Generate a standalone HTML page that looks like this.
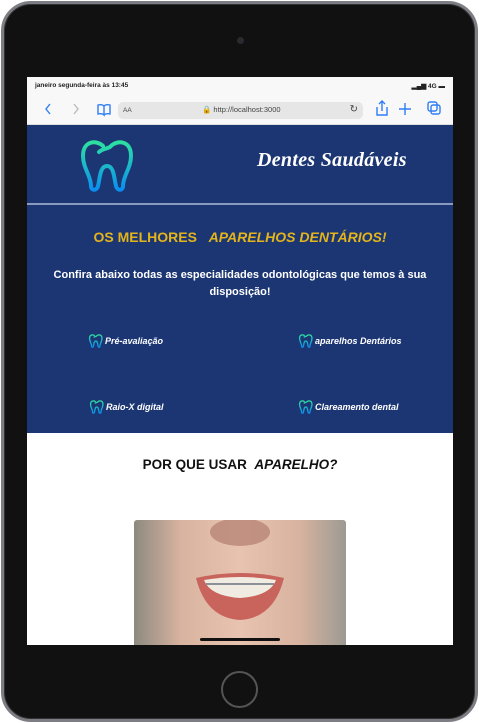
<!DOCTYPE html>
<html><head><meta charset="utf-8"><style>
*{margin:0;padding:0;box-sizing:border-box}
body{width:479px;height:723px;background:#fff;position:relative;overflow:hidden;font-family:"Liberation Sans",sans-serif}
.frame{position:absolute;left:1px;top:1px;width:477px;height:721px;border-radius:30px;background:#111;border:3px solid #7d7e84;box-shadow:inset 0 0 0 1px #333}
.cam{position:absolute;left:237px;top:37px;width:7px;height:7px;border-radius:50%;background:#2a2a30}
.home{position:absolute;left:221px;top:671px;width:37px;height:37px;border-radius:50%;border:2px solid #555}
.screen{position:absolute;left:27px;top:77px;width:426px;height:568px;background:#fff;overflow:hidden}
.status{height:17px;background:#f8f8f8;font-size:6.5px;font-weight:bold;color:#222;padding:5px 0 0 8px;position:relative}
.status .r{position:absolute;right:8px;top:5px}
.tool{height:31px;background:#f8f8f8;position:relative;border-bottom:1px solid #ddd}
.url{position:absolute;left:91px;top:8px;width:245px;height:17px;background:#e6e6e6;border-radius:5px;font-size:7.5px;color:#444}
.blue{position:absolute;left:0;top:48px;width:426px;height:308px;background:#1c3674}
.line{position:absolute;left:0;top:78px;width:426px;height:2px;background:#8a9bc2}
.title{position:absolute;left:230px;top:24px;font-family:"Liberation Serif",serif;font-style:italic;font-weight:bold;color:#fff;font-size:20px;letter-spacing:0.3px}
.h1{position:absolute;top:104px;width:426px;text-align:center;color:#e3b51b;font-weight:bold;font-size:14px}
.p{position:absolute;top:142px;left:14px;width:398px;text-align:center;color:#fff;font-weight:bold;font-size:11px;line-height:17px}
.it{position:absolute;color:#fff;font-weight:bold;font-style:italic;font-size:9px;display:flex;align-items:center;gap:2px}
.h2{position:absolute;top:380px;width:426px;text-align:center;font-weight:bold;font-size:13.5px;color:#111}
.img{position:absolute;left:107px;top:443px;width:212px;height:130px;border-radius:3px;overflow:hidden;background:linear-gradient(90deg,#8d8a80,#d8b3a0 22%,#e8c4b0 50%,#d8b3a0 78%,#9c9a92)}
.bar{position:absolute;left:173px;top:561px;width:80px;height:3px;border-radius:2px;background:#111}
</style></head><body>
<div class="frame"></div><div class="cam"></div><div class="home"></div>
<div class="screen">
<div class="status">janeiro segunda-feira às 13:45<span class="r">▂▄▆ 4G ▬</span></div>
<div class="tool">
<svg width="426" height="31" style="position:absolute;left:0;top:0" fill="none" stroke="#2f7ef6" stroke-width="1.4"><path d="M23 10 l-4 5 l4 5"/><path d="M47 10 l4 5 l-4 5" stroke="#bbb"/><path d="M71 11 q4 -1 6 1 v9 q-2 -2 -6 -1 z M77 12 q2 -2 6 -1 v9 q-4 -1 -6 1"/><path d="M350 13 v8 h10 v-8 M355 7 v10 M352 10 l3 -3 l3 3"/><path d="M372 15 h12 M378 9 v12"/><rect x="404" y="11" width="9" height="9" rx="2"/><rect x="401" y="8" width="9" height="9" rx="2"/></svg>
<div class="url"><span style="position:absolute;left:5px;top:5px;font-size:6.5px">AA</span><span style="position:absolute;left:84px;top:3px">🔒 http://localhost:3000</span><span style="position:absolute;right:5px;top:2px;font-size:10px">↻</span></div>
</div>
<div class="blue">
<svg width="0" height="0" style="position:absolute"><defs><linearGradient id="g" x1="0" y1="0" x2="0" y2="1"><stop offset="0" stop-color="#2de0a0"/><stop offset="1" stop-color="#0a8ff0"/></linearGradient></defs></svg>
<svg style="position:absolute;left:50px;top:11px" width="58" height="56" viewBox="0 0 58 56"><path d="M22 16 c4-4 10-3 12-6 c6-6 20-6 20 10 c0 12-8 20-8 30 c0 5-6 5-7 0 c-2-8-2-20-9-20 s-7 12-9 20 c-1 5-7 5-7 0 c0-10-8-18-8-30 c0-16 14-16 20-10" fill="none" stroke="url(#g)" stroke-width="4" stroke-linecap="round"/></svg>
<div class="title">Dentes Saudáveis</div>
<div class="line"></div>
<div class="h1">OS MELHORES &nbsp;&nbsp;<i>APARELHOS DENTÁRIOS!</i></div>
<div class="p">Confira abaixo todas as especialidades odontológicas que temos à sua disposição!</div>
<div class="it" style="left:61px;top:207px"><svg width="15" height="17" viewBox="0 0 58 56"><path d="M22 16 c4-4 10-3 12-6 c6-6 20-6 20 10 c0 12-8 20-8 30 c0 5-6 5-7 0 c-2-8-2-20-9-20 s-7 12-9 20 c-1 5-7 5-7 0 c0-10-8-18-8-30 c0-16 14-16 20-10" fill="none" stroke="url(#g)" stroke-width="5"/></svg>Pré-avaliação</div>
<div class="it" style="left:271px;top:207px"><svg width="15" height="17" viewBox="0 0 58 56"><path d="M22 16 c4-4 10-3 12-6 c6-6 20-6 20 10 c0 12-8 20-8 30 c0 5-6 5-7 0 c-2-8-2-20-9-20 s-7 12-9 20 c-1 5-7 5-7 0 c0-10-8-18-8-30 c0-16 14-16 20-10" fill="none" stroke="url(#g)" stroke-width="5"/></svg>aparelhos Dentários</div>
<div class="it" style="left:62px;top:273px"><svg width="15" height="17" viewBox="0 0 58 56"><path d="M22 16 c4-4 10-3 12-6 c6-6 20-6 20 10 c0 12-8 20-8 30 c0 5-6 5-7 0 c-2-8-2-20-9-20 s-7 12-9 20 c-1 5-7 5-7 0 c0-10-8-18-8-30 c0-16 14-16 20-10" fill="none" stroke="url(#g)" stroke-width="5"/></svg>Raio-X digital</div>
<div class="it" style="left:271px;top:273px"><svg width="15" height="17" viewBox="0 0 58 56"><path d="M22 16 c4-4 10-3 12-6 c6-6 20-6 20 10 c0 12-8 20-8 30 c0 5-6 5-7 0 c-2-8-2-20-9-20 s-7 12-9 20 c-1 5-7 5-7 0 c0-10-8-18-8-30 c0-16 14-16 20-10" fill="none" stroke="url(#g)" stroke-width="5"/></svg>Clareamento dental</div>
</div>
<div class="h2">POR QUE USAR &nbsp;<i>APARELHO?</i></div>
<div class="img"><svg width="212" height="130" viewBox="0 0 212 130"><ellipse cx="106" cy="12" rx="30" ry="14" fill="#b88575" opacity=".8"/><path d="M62 58 q44 -10 88 0 q-10 40 -44 42 q-34 -2 -44 -42z" fill="#c9645c"/><path d="M70 60 q36 -6 72 0 q-6 16 -36 18 q-30 -2 -36 -18z" fill="#f1ece2"/><path d="M72 64 h68" stroke="#8a8f98" stroke-width="2"/></svg></div>
<div class="bar"></div>
</div>
</body></html>
